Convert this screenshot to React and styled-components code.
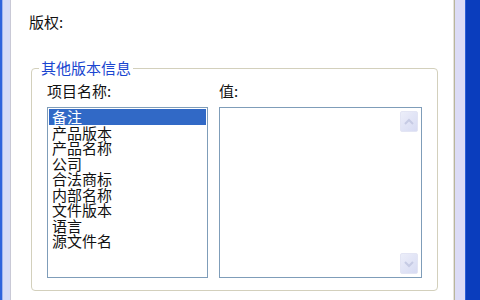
import React from "react";
import styled, { createGlobalStyle } from "styled-components";

const Global = createGlobalStyle`
  html, body { margin: 0; padding: 0; background: #fff; }
  body { font-family: "Liberation Sans", "Noto Sans CJK SC", sans-serif; }
`;

const Window = styled.div`
  display: flex;
  width: 480px;
  height: 300px;
  overflow: hidden;
`;

const LeftFrame = styled.div`
  width: 11px;
  flex: none;
  background: linear-gradient(to right, #2f63dc 0 2px, #9fb3ee 2px 3px, #d7dbf7 3px 10px, #c9c9d6 10px 11px);
`;

const RightFrame = styled.div`
  width: 27px;
  flex: none;
  background: linear-gradient(
    to right,
    #e6e3dc 0 1px,
    #b9b69c 1px 2px,
    #dcdcf6 2px 12px,
    #2d5fd6 12px 13px,
    #0a3dbd 13px 100%
  );
`;

const Content = styled.div`
  flex: 1;
  background: #fff;
  padding: 14px 15px 0 18px;
  color: #111;
  font-family: "Noto Sans CJK SC", sans-serif;
  font-size: 15px;
`;

const Line = styled.div`
  line-height: 16px;
  height: 16px;
`;

const GroupBox = styled.div`
  position: relative;
  margin: 38px 0 0 2px;
  height: 223px;
  border: 1px solid #d3d0bc;
  border-radius: 4px;
  padding: 14px 15px 0 15px;
  box-sizing: border-box;
  display: grid;
  grid-template-columns: 161px 203px;
  column-gap: 11px;
`;

const Legend = styled.div`
  position: absolute;
  top: -9px;
  left: 7px;
  padding: 0 2px;
  background: #fff;
  color: #1a46d0;
  line-height: 16px;
`;

const Column = styled.div`
  display: flex;
  flex-direction: column;
`;

const Label = styled.div`
  line-height: 16px;
  height: 16px;
  margin-bottom: 8px;
`;

const ListBox = styled.div`
  height: 171px;
  box-sizing: border-box;
  border: 1px solid #7f9db9;
  padding: 1px;
  background: #fff;
  display: flex;
`;

const Items = styled.div`
  flex: 1;
`;

const Item = styled.div`
  height: 15.5px;
  line-height: 15.5px;
  padding-left: 3px;
  background: ${(p) => (p.$selected ? "#3169c6" : "transparent")};
  color: ${(p) => (p.$selected ? "#fff" : "#111")};
`;

const ScrollTrack = styled.div`
  width: 22px;
  display: flex;
  flex-direction: column;
  justify-content: space-between;
  align-items: center;
  padding: 2px 0;
`;

const ScrollBtn = styled.div`
  width: 16px;
  height: 19px;
  border-radius: 2px;
  background: linear-gradient(135deg, #eceef9, #d7dbf3);
  border: 1px solid #e3e5f4;
  display: flex;
  align-items: center;
  justify-content: center;
`;

const Arrow = ({ up }) => (
  <svg width="10" height="8" viewBox="0 0 10 8">
    <path
      d={up ? "M1 6 L5 2 L9 6" : "M1 2 L5 6 L9 2"}
      fill="none"
      stroke="#c6cbe4"
      strokeWidth="2"
    />
  </svg>
);

const items = ["备注", "产品版本", "产品名称", "公司", "合法商标", "内部名称", "文件版本", "语言", "源文件名"];

export default function App() {
  return (
    <>
      <Global />
      <Window>
        <LeftFrame />
        <Content>
          <Line>版权:</Line>
          <GroupBox>
            <Legend>其他版本信息</Legend>
            <Column>
              <Label>项目名称:</Label>
              <ListBox>
                <Items>
                  {items.map((t, i) => (
                    <Item key={t} $selected={i === 0}>{t}</Item>
                  ))}
                </Items>
              </ListBox>
            </Column>
            <Column>
              <Label>值:</Label>
              <ListBox>
                <Items />
                <ScrollTrack>
                  <ScrollBtn><Arrow up /></ScrollBtn>
                  <ScrollBtn><Arrow /></ScrollBtn>
                </ScrollTrack>
              </ListBox>
            </Column>
          </GroupBox>
        </Content>
        <RightFrame />
      </Window>
    </>
  );
}
